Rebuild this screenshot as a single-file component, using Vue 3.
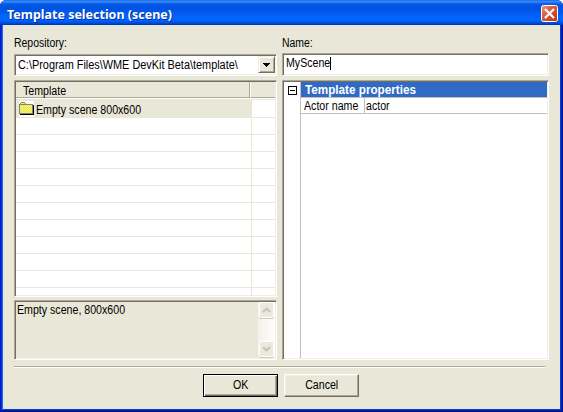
<script setup>
import { ref } from 'vue'

const repository = ref('C:\\Program Files\\WME DevKit Beta\\template\\')
const name = ref('MyScene')
const templates = ['Empty scene 800x600']
const emptyRows = 11
</script>

<template>
  <div class="window">
    <header class="titlebar">
      <h1>Template selection (scene)</h1>
      <button class="close" aria-label="Close">
        <svg width="17" height="17" viewBox="0 0 17 17">
          <defs>
            <linearGradient id="red" x1="0" y1="0" x2="1" y2="1">
              <stop offset="0" stop-color="#ee9880" />
              <stop offset=".4" stop-color="#e1583a" />
              <stop offset="1" stop-color="#bd3210" />
            </linearGradient>
          </defs>
          <rect x=".5" y=".5" width="16" height="16" rx="2" fill="url(#red)" stroke="#fff" />
          <path d="M4 4l9 9M13 4l-9 9" stroke="#fff" stroke-width="2.2" />
        </svg>
      </button>
    </header>

    <main class="body">
      <div class="columns">
        <section class="left">
          <div class="label"><span class="t-repo">Repository:</span></div>
          <div class="combo sunken">
            <span class="t-path">{{ repository }}</span>
            <button class="drop" aria-label="Open">
              <svg width="7" height="4" viewBox="0 0 7 4" shape-rendering="crispEdges">
                <path d="M0 0h7v1H6v1H5v1H4v1H3V3H2V2H1V1H0z" />
              </svg>
            </button>
          </div>
          <div class="list sunken">
            <div class="list-head">
              <div class="th first"><span class="t-template">Template</span></div>
              <div class="th"></div>
            </div>
            <div v-for="t in templates" :key="t" class="row">
              <div class="cell selected">
                <svg class="folder" width="15" height="16" viewBox="3 1 15 16" shape-rendering="crispEdges">
                  <path d="M0 0h18v17H0z" fill="#fff" />
                  <path d="M4 15h14V5h-1v9H4z" fill="#000" />
                  <path d="M3 4h1V3h1V2h4v1h1v1h7v10H3z" fill="#808080" />
                  <path d="M5 3h4v1H5zM4 5h12v8H4z" fill="#ffff18" />
                  <path
                    v-for="y in 8"
                    :key="y"
                    :d="`M${4 + (y % 2)} ${y + 4.5}h12`"
                    stroke="#dcdcb0"
                    stroke-dasharray="1 1"
                    :stroke-dashoffset="0"
                    fill="none"
                  />
                  <path d="M16 5h1v9h-1z" fill="#808080" />
                </svg>
                <span class="t-row">{{ t }}</span>
              </div>
              <div class="cell"></div>
            </div>
            <div v-for="n in emptyRows" :key="n" class="row">
              <div class="cell"></div>
              <div class="cell"></div>
            </div>
          </div>
          <div class="desc sunken">
            <p><span class="t-desc">Empty scene, 800x600</span></p>
            <div class="scroll">
              <div class="arrow">
                <svg width="9" height="6" viewBox="0 0 9 6"><path d="M1 5l3.5-3.5L8 5" /></svg>
              </div>
              <div class="arrow">
                <svg width="9" height="6" viewBox="0 0 9 6"><path d="M1 1l3.5 3.5L8 1" /></svg>
              </div>
            </div>
          </div>
        </section>

        <section class="right">
          <div class="label"><span class="t-name">Name:</span></div>
          <div class="field sunken"><span class="t-value">{{ name }}</span><i class="caret"></i></div>
          <div class="props sunken">
            <div class="gutter">
              <svg width="9" height="9" viewBox="0 0 9 9" shape-rendering="crispEdges">
                <path d="M.5 .5h8v8h-8zM2 4.5h5" fill="none" stroke="#000" />
              </svg>
            </div>
            <div class="grid">
              <div class="group"><span class="t-group">Template properties</span></div>
              <div class="prop">
                <div class="key"><span class="t-key">Actor name</span></div>
                <div class="val"><span class="t-val">actor</span></div>
              </div>
            </div>
          </div>
        </section>
      </div>

      <hr class="rule" />
      <footer class="actions">
        <button class="btn default"><span class="t-ok">OK</span></button>
        <button class="btn"><span class="t-cancel">Cancel</span></button>
      </footer>
    </main>
  </div>
</template>

<style>
body {
  margin: 0;
  background: #fff;
}
</style>

<style scoped>
* {
  box-sizing: border-box;
}
.window {
  display: flex;
  flex-direction: column;
  width: 563px;
  height: 412px;
  padding: 0 3px 3px;
  overflow: hidden;
  border-radius: 6px 6px 0 0;
  background: linear-gradient(90deg, #0019cf 0 1px, #0831d9 1px 2px, #166aee 2px 3px, #0040df 3px 560px, #0040df 560px 561px, #001ea8 561px 562px, #00138c 562px);
  box-shadow: inset 0 -1px #00138c, inset 0 -2px #001ea0;
  font: 12px/13px "Liberation Sans", Arial, sans-serif;
  color: #000;
}
span {
  display: inline-block;
  transform: scaleX(0.885);
  transform-origin: 0 0;
  white-space: pre;
}
button {
  padding: 0;
  font: inherit;
  color: inherit;
}
.titlebar {
  display: flex;
  flex: none;
  align-items: flex-start;
  justify-content: space-between;
  height: 25px;
  margin: 0 -3px;
  padding: 5px 5px 0 7px;
  background: linear-gradient(#0a50d4 0, #3d95ff 1px, #2a83f8 2px, #0a5ae8 4px, #0052df 7px, #0058ea 12px, #0063fb 16px, #0066ff 20px, #0058ee 22px, #0040c4 24px, #0036b0 25px);
}
h1 {
  margin: 2px 0 0;
  font: bold 13px/14px "Noto Sans", sans-serif;
  color: #fff;
  text-shadow: 1px 1px #0a2f9c;
  transform: scaleX(0.96);
  transform-origin: 0 0;
  white-space: pre;
}
.close {
  display: flex;
  width: 17px;
  height: 17px;
  border: 0;
  background: none;
}
.body {
  flex: 1;
  padding: 12px 11px 0;
  background: #e9e7d7;
}
.columns {
  display: grid;
  grid-template-columns: 263px 267px;
  gap: 5px;
  height: 323px;
}
.left,
.right {
  display: flex;
  flex-direction: column;
}
.label {
  height: 16px;
}
.t-repo,
.t-name {
  transform: scaleX(0.87);
}
.sunken {
  border: 1px solid;
  border-color: #aca899 #fff #fff #aca899;
  box-shadow: inset 1px 1px #716f64, inset -1px -1px #f1efe2;
  background: #fff;
}
.combo {
  display: flex;
  justify-content: space-between;
  height: 22px;
  margin-top: 1px;
  padding: 1px 1px 2px 3px;
  line-height: 18px;
}
.t-path {
  width: 220px;
  transform: scaleX(0.908);
}
.drop {
  display: flex;
  align-items: center;
  justify-content: center;
  width: 17px;
  height: 17px;
  border: 1px solid;
  border-color: #f1efe2 #716f64 #716f64 #f1efe2;
  box-shadow: inset 1px 1px #fff, inset -1px -1px #aca899;
  background: #e9e7d7;
}
.list {
  height: 217px;
  margin-top: 4px;
  padding: 1px;
  overflow: hidden;
}
.list-head {
  display: grid;
  grid-template-columns: 234px 1fr;
  height: 18px;
  background: #e9e7d7;
}
.th {
  height: 16px;
  border-bottom: 1px solid #aca899;
  box-shadow: 0 1px #fff;
}
.first {
  padding: 3px 0 0 7px;
  border-right: 1px solid #aca899;
}
.th + .th {
  border-left: 1px solid #fff;
}
.row {
  display: grid;
  grid-template-columns: 236px 1fr;
  grid-template-rows: 100%;
  height: 17px;
}
.list-head + .row {
  height: 18px;
}
.cell {
  display: flex;
  min-height: 0;
  border-bottom: 1px solid #e9e7d7;
}
.cell:first-child {
  border-right: 1px solid #e9e7d7;
}
.selected {
  gap: 2px;
  padding-left: 3px;
  background: #e9e7d7;
  line-height: 20px;
}
.folder {
  flex: none;
  margin-top: 1px;
}
.desc {
  display: flex;
  justify-content: space-between;
  height: 60px;
  margin-top: 3px;
  padding: 1px;
  background: #e9e7d7;
}
.desc p {
  margin: 2px 0 0 1px;
}
.scroll {
  display: flex;
  flex-direction: column;
  justify-content: space-between;
  width: 17px;
  background: linear-gradient(90deg, #f3f1ec, #fefefb);
}
.arrow {
  display: flex;
  align-items: center;
  justify-content: center;
  height: 16px;
  margin: 0 1px;
  border: 1px solid #fff;
  border-radius: 2px;
  box-shadow: 0 1px #cbc9ba;
  background: #eae9df;
}
.arrow + .arrow {
  margin-bottom: 1px;
}
.arrow path {
  fill: none;
  stroke: #c5c4b9;
  stroke-width: 2;
}
.field {
  display: flex;
  height: 23px;
  padding: 2px 0 0 3px;
  line-height: 14px;
}
.t-value {
  width: 44px;
}
.caret {
  width: 1px;
  height: 13px;
  margin-top: 1px;
  background: #000;
}
.props {
  display: flex;
  flex: 1;
  margin-top: 4px;
  padding: 1px;
}
.gutter {
  width: 17px;
  padding: 4px 0 0 4px;
  border-right: 1px solid #c0c0c0;
}
.gutter svg {
  display: block;
}
.grid {
  flex: 1;
}
.group {
  height: 16px;
  padding-left: 4px;
  border-bottom: 1px solid #c0c0c0;
  background: #316ac5;
  color: #fff;
  font-weight: bold;
  line-height: 16px;
}
.t-group {
  transform: scaleX(0.975);
}
.prop {
  display: flex;
  height: 16px;
  border-bottom: 1px solid #c0c0c0;
  line-height: 16px;
}
.key {
  width: 64px;
  padding-left: 3px;
  border-right: 1px solid #c0c0c0;
}
.val {
  padding-left: 1px;
}
.rule {
  height: 2px;
  margin: 6px 4px 0 0;
  border: 0;
  border-top: 1px solid #aca899;
  border-bottom: 1px solid #fff;
}
.actions {
  display: flex;
  gap: 6px;
  margin: 6px 0 0 189px;
}
.btn {
  width: 75px;
  height: 23px;
  border: 1px solid;
  border-color: #fff #716f64 #716f64 #fff;
  box-shadow: inset -1px -1px #aca899, inset 1px 1px #f1efe2;
  background: #e9e7d7;
}
.btn span {
  transform-origin: 50% 0;
}
.default {
  border-color: #000;
  box-shadow: inset 1px 1px #fff, inset -1px -1px #716f64, inset -2px -2px #aca899;
}
</style>
